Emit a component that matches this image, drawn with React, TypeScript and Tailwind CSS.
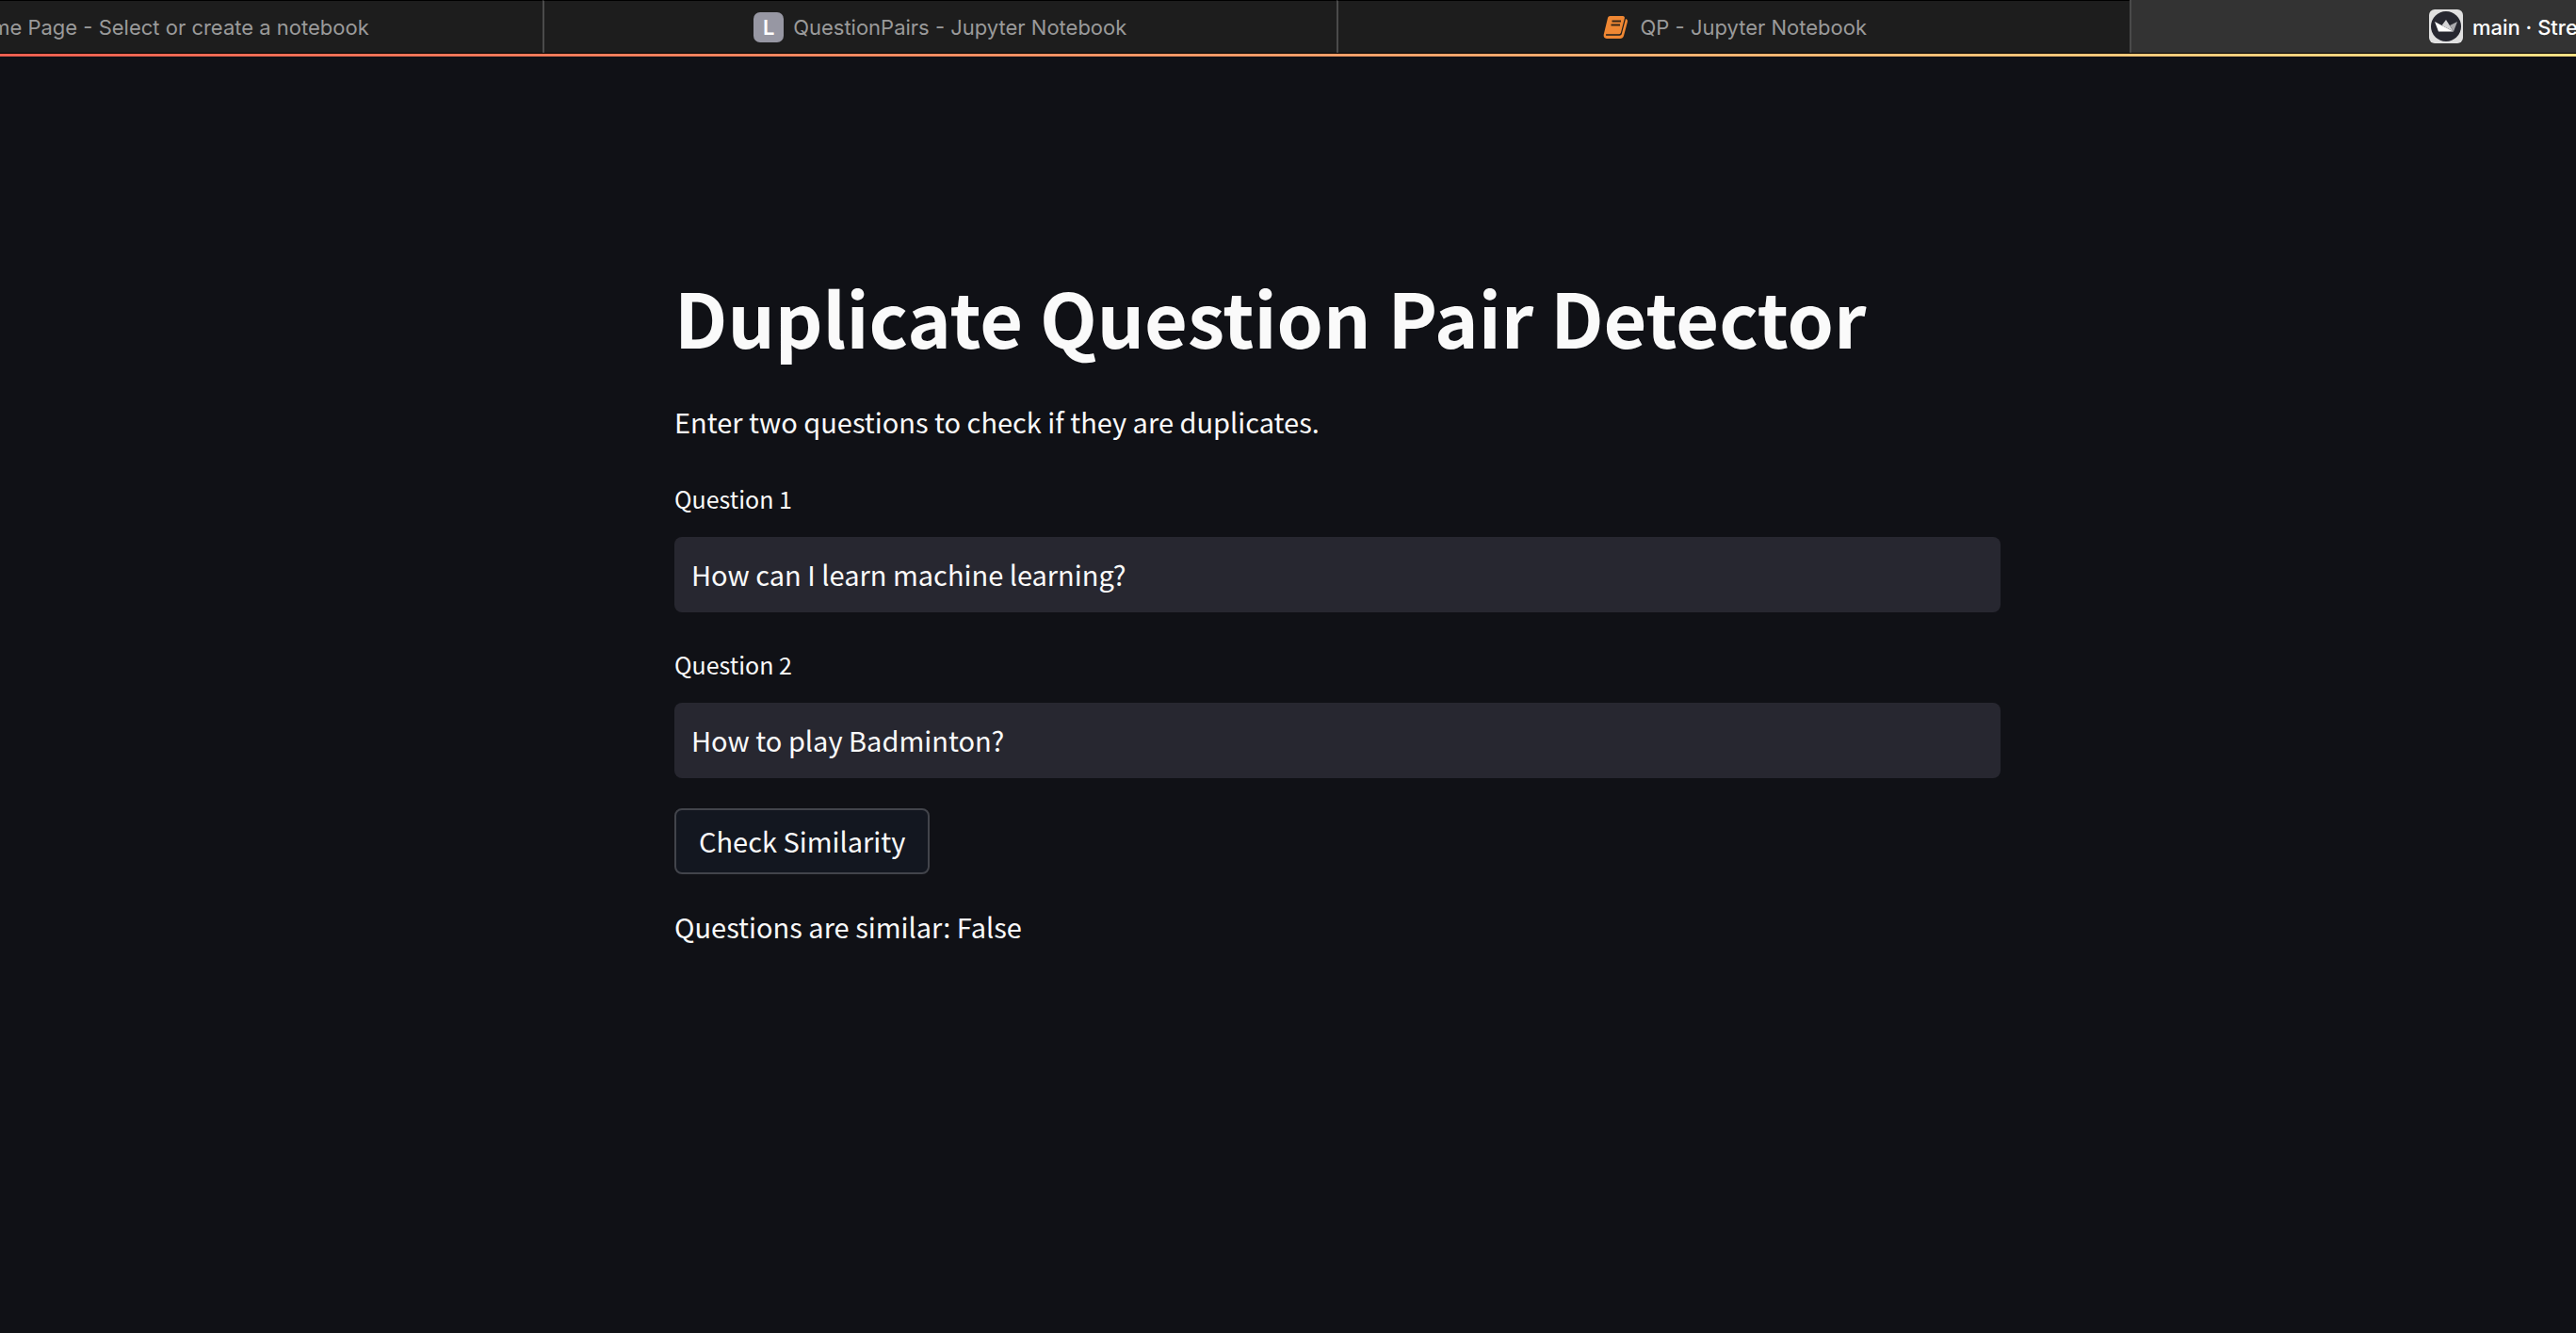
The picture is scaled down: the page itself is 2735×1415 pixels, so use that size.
import { useState, type ReactNode } from "react";

function LetterIcon() {
  return (
    <span className="flex size-8 items-center justify-center rounded-[7px] bg-[#9797a3] font-['Inter',sans-serif] text-[22px] leading-8 font-semibold text-white">
      L
    </span>
  );
}

function BookIcon() {
  return (
    <svg className="size-8" viewBox="0 0 32 32" aria-hidden="true">
      <path
        d="M9.500 4H23c1.400 0 2.200 1 1.900 2.300L21 21.500c-.3 1.100-1.200 1.800-2.300 1.800H5.500c-.8 0-.8 1.500 0 1.500h14c1.200 0 2-.6 2.300-1.700L26 7c1.700.5 2.300 1.700 1.900 3.200L24 25c-.5 1.900-2 3-3.900 3H5.800C3.600 28 2.200 26 2.700 23.800L7 6c.3-1.200 1.300-2 2.500-2z"
        fill="#ef8733"
      />
      <path d="M11.500 9.500H21M10.500 13.500H20" stroke="#3a2818" strokeWidth="2" />
    </svg>
  );
}

function CrownIcon() {
  return (
    <svg className="size-9" viewBox="0 0 36 36" aria-hidden="true">
      <rect width="36" height="36" rx="6" fill="#e0e0e0" />
      <circle cx="18" cy="18" r="16" fill="#262730" />
      <path d="M6 13l7.500 4L26 23.500H10z" fill="#fff" />
      <path d="M18 11l-4.500 6L26 23.500z" fill="#d4d4d6" />
      <path d="M22 17l8-4-4 10.500z" fill="#a9a9ad" />
    </svg>
  );
}

function Tab({ icon, title, active = false }: { icon: ReactNode; title: string; active?: boolean }) {
  return (
    <button
      type="button"
      role="tab"
      aria-selected={active}
      className={
        active
          ? "flex w-[32%] shrink-0 items-center justify-center gap-2.5 border-l-2 border-[#4a4a4a] bg-[#333333] font-medium whitespace-nowrap text-white"
          : "flex w-[32%] shrink-0 items-center justify-center gap-2.5 border-t border-l-2 border-t-black border-l-[#4a4a4a] whitespace-nowrap text-[#9a9a9a]"
      }
    >
      {icon}
      <span className="pt-0.5">{title}</span>
    </button>
  );
}

function Field({ id, label, initial }: { id: string; label: string; initial: string }) {
  const [value, setValue] = useState(initial);
  return (
    <div className="flex flex-col gap-[18px]">
      <label htmlFor={id} className="text-[25px] leading-[46px]">
        {label}
      </label>
      <input
        id={id}
        type="text"
        value={value}
        onChange={(e) => setValue(e.target.value)}
        className="h-20 w-full rounded-lg bg-[#272730] px-[18px] pb-0.5 text-[29px] outline-none"
      />
    </div>
  );
}

export default function App() {
  return (
    <div className="min-h-screen overflow-hidden bg-[#101116] text-[#fafafa]">
      <div
        role="tablist"
        className="flex h-14 justify-center bg-[#1d1d1d] pl-[102px] font-['Inter',sans-serif] text-[22px]"
      >
        <Tab icon={<BookIcon />} title="Home Page - Select or create a notebook" />
        <Tab icon={<LetterIcon />} title="QuestionPairs - Jupyter Notebook" />
        <Tab icon={<BookIcon />} title="QP - Jupyter Notebook" />
        <Tab icon={<CrownIcon />} title="main · Streamlit" active />
      </div>
      <div className="h-1 border-t border-black bg-linear-to-r from-[#ec5f50] via-[#f79c68] to-[#fee084]" />
      <main className="pt-56 pl-[105px] font-['Noto_Sans_CJK_SC',sans-serif]">
        <div className="mx-auto flex max-w-[1408px] flex-col gap-8">
          <h1 className="text-[79px] leading-[104px] font-bold">Duplicate Question Pair Detector</h1>
          <p className="text-[29px] leading-[54px]">Enter two questions to check if they are duplicates.</p>
          <Field id="question-1" label="Question 1" initial="How can I learn machine learning?" />
          <Field id="question-2" label="Question 2" initial="How to play Badminton?" />
          <button
            type="button"
            className="h-[70px] self-start rounded-lg border-2 border-[#42444b] bg-[#131720] px-6 pb-0.5 text-[29px] leading-[46px]"
          >
            Check Similarity
          </button>
          <p className="text-[29px] leading-[46px]">Questions are similar: False</p>
        </div>
      </main>
    </div>
  );
}
